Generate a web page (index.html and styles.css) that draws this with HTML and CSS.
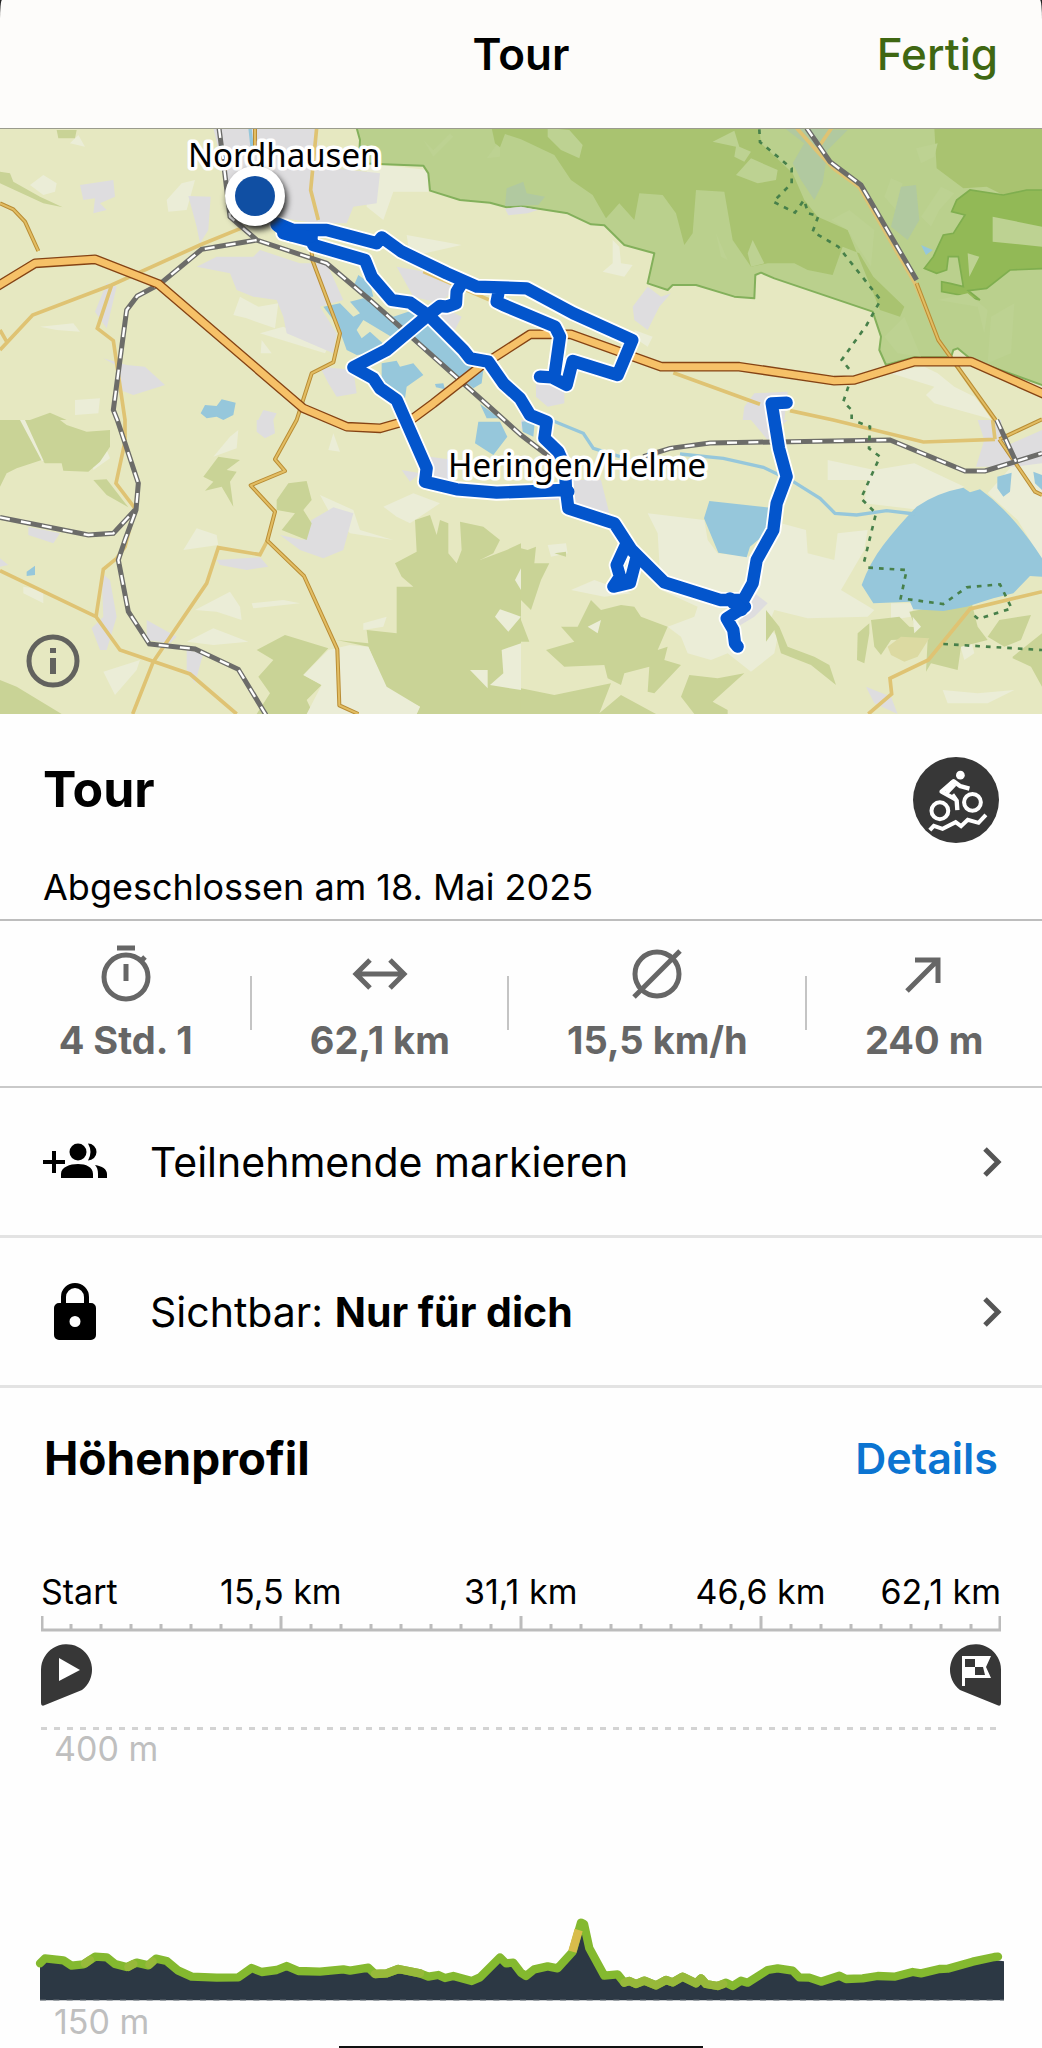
FILE: index.html
```
<!DOCTYPE html>
<html lang="de">
<head>
<meta charset="utf-8">
<meta name="viewport" content="width=device-width, initial-scale=1">
<title>Tour</title>
<link rel="stylesheet" href="styles.css">
</head>
<body>
<div class="backdrop">
  <header class="navbar">
    <h1 class="navbar-title">Tour</h1>
    <button class="done" type="button">Fertig</button>
  </header>
</div>

<main>
  <section class="map" aria-label="Karte">
    <svg class="map-canvas" viewBox="0 1 1042 585" preserveAspectRatio="xMidYMid slice">
      <defs>
        <path id="main-road" d="M-10,500 105,430 285,418 475,492 910,865 1040,920 1140,925 1235,898 1300,850 1440,740 1590,643 1713,643 1983,740 2218,740 2503,782 2563,780 2743,725 2913,725 3136,824"/>
        <path id="track" d="M830,310 880,330 980,330 1130,370 1145,352 1205,395 1340,460 1430,500 1580,505 1720,580 1897,660 1853,765 1718,723 1700,795 1655,772 1620,770M1663,770 1680,650 1665,620 1510,555 1490,545 1498,505M1385,490 1370,515 1368,550 1340,560 1320,558 1285,585 1160,690 1060,742 1120,775 1140,805 1190,840 1280,1045 1275,1085 1370,1108 1490,1118 1690,1110M850,340 935,362 940,375 1095,420 1115,470 1175,540 1230,548 1290,590 1390,690 1410,715 1465,725 1510,790 1560,835 1590,885 1640,905 1633,955 1675,995 1695,1040 1698,1110 1705,1165 1843,1210 1895,1290 1993,1387 2160,1440 2230,1440 2258,1390 2270,1320 2320,1230 2330,1150 2360,1070 2337,985 2315,850 2360,848M1880,1270 1850,1335 1860,1370 1840,1400 1890,1388 1910,1310M2200,1450 2235,1460 2180,1495 2200,1530 2205,1570 2213,1580"/>
        <path id="rails" d="M657,24 672,140 690,290 770,360 980,430 1110,540 1563,945 1650,1012M770,360 605,388 480,492 412,528 380,570 340,870 352,900 415,1090 408,1170 375,1260 355,1320 385,1475 448,1572 585,1587 715,1648 798,1785M0,1192 265,1245 340,1240 405,1170M1930,1010 2010,985 2130,969 2670,960 2895,1053 2955,1053 3126,1000M2420,24 2490,125 2583,195 2750,480M2990,900 3048,1025"/>
        <path id="state-roads" d="M0,250 40,268 75,305 115,393M765,24 765,100M935,395 937,420 1020,640 1000,727 935,760 890,900 825,1018 855,1053 752,1096 825,1175 802,1262 912,1368 1012,1588 1018,1756 1075,1782M2750,490 2815,660 2987,900M2998,958 3105,1115 3126,1125M2998,958 3126,898"/>
      </defs>
      <g transform="translate(0 -8) scale(.33333)">
        <!-- north-west areas -->
        <g class="pale">
          <path d="M90,195 130,165 170,190 165,215 130,225ZM500,240 545,190 585,180 560,270 505,275ZM700,585 720,530 775,560 835,550 825,625 740,595ZM780,640 850,620 985,680 975,700ZM120,620 220,610 240,635 170,630ZM785,660 815,700 782,700ZM1220,345 1385,375 1230,410ZM1100,130 1285,150 1285,215 1180,215 1150,300 1100,260ZM235,45 255,80 210,70ZM225,840 300,835 295,880 225,885Z"/>
        </g>
        <g class="town">
          <path d="M640,24 950,24 960,140 1140,160 1130,250 1060,260 1040,310 950,310 820,290 690,290 670,150ZM565,228 632,230 625,330 600,370 590,320ZM240,195 340,180 345,230 300,250 320,270 280,280 285,235 250,240ZM590,440 650,410 760,410 780,390 900,430 980,430 1030,540 960,560 1010,640 1000,700 860,640 850,590 830,540 760,530 710,510 690,460ZM320,490 350,500 320,625 285,575ZM310,715 380,735 435,740 495,795 400,825 360,810 355,740ZM960,740 1060,750 1070,820 1010,830 985,790ZM1190,440 1300,460 1370,500 1320,550 1240,530ZM1290,540 1385,590 1360,640ZM790,870 830,880 820,900 775,900Z"/>
          <path d="M1040,160 1130,180 1110,240 1050,250Z"/>
        </g>
        <g class="forest">
          <path d="M0,155 30,160 40,185 120,230 188,262 130,250 0,190ZM90,900 150,878 200,900ZM170,30 230,30 225,55 175,55Z"/>
        </g>
        <!-- nature park -->
        <path class="park" d="M1070,0 1070,24 1080,60 1076,130 1270,137 1285,160 1290,212 1380,240 1470,248 1520,262 1563,258 1703,280 1773,313 1813,316 1873,375 1963,400 1943,490 2003,510 2018,495 2088,495 2203,530 2263,535 2266,465 2283,458 2323,475 2618,575 2643,650 2638,690 2658,735 2743,712 2853,712 2860,690 2873,685 2913,718 3140,800 3140,0Z"/>
        <path class="meadow" d="M1270,60 1300,110 1360,50 1350,40 1300,90ZM1460,115 1500,60 1500,110Z"/>
        <path class="settlement" d="M1520,205 1570,185 1580,220 1635,230 1615,255 1515,258Z"/>
        <path class="town" d="M1515,266 1563,260 1613,270 1583,280 1525,286Z"/>
        <path class="wood" d="M1475,24 1485,70 1500,82 1515,42 1563,58 1663,105 1713,180 1778,225 1798,260 1818,295 1858,250 1903,300 1918,220 1988,225 2028,280 2053,375 2078,340 2088,210 2173,215 2198,360 2253,440 2303,430 2383,430 2423,450 2498,465 2528,380 2578,400 2620,470 2713,560 2700,590 2640,570 2620,520 2543,330 2453,290 2413,240 2378,160 2283,70 2278,24ZM2803,24 3126,24 3126,220 3010,225 2960,200 2890,205 2810,145Z"/>
        <path class="wood deep" d="M3140,210 3080,210 3010,225 2910,210 2870,240 2855,275 2895,285 2860,340 2830,345 2800,410 2773,445 2810,460 2840,450 2845,410 2875,410 2890,500 2850,490 2825,485 2825,515 2880,525 2940,540 2905,512 2960,505 3030,450 3140,445Z"/>
        <g transform="translate(1563 0)">
          <g class="meadow">
            <path d="M80,24 145,30 185,75 175,115 120,90 80,50ZM575,65 640,32 655,80 690,95 670,125 640,110 645,80ZM645,165 690,115 770,150 765,180 710,190ZM680,400 695,360 730,430 690,440ZM930,300 985,270 1060,330 1050,440 1010,380 980,330ZM1110,175 1145,190 1125,270 1090,230ZM1200,290 1260,200 1300,220 1255,270 1230,320ZM1415,290 1563,320 1563,380 1415,365ZM1340,400 1375,410 1345,470ZM1250,540 1340,520 1400,570 1390,640 1370,560ZM1410,590 1480,550 1470,700 1400,730ZM1090,650 1150,590 1200,710 1130,700Z"/>
            <path d="M585,340 620,420 600,410ZM1185,85 1250,70 1240,110 1200,130Z"/>
          </g>
          <path class="settlement" d="M790,24 980,30 920,90 905,190 880,240 840,180 815,130 850,70ZM1140,200 1185,195 1195,300 1160,360 1110,320Z"/>
          <path class="town" d="M335,560 380,500 420,530 450,520 415,560 380,630 340,600ZM45,790 130,800 130,850 80,860 45,830ZM700,820 800,815 790,900 665,900 670,860Z"/>
          <path class="pale" d="M275,360 295,380 300,430 335,435 310,470 245,455 275,430ZM1095,755 1210,740 1250,760 1300,800 1360,830 1420,900 1240,850 1215,825 1240,800ZM340,630 395,650 380,680 350,660Z"/>
          <path class="water" d="M1200,375 1235,390 1215,405Z"/>
        </g>
        <!-- south-west areas -->
        <g transform="translate(0 900)">
          <path class="pale" d="M30,130 100,120 80,10 0,0 0,190 20,160ZM640,110 690,50 715,30 710,85ZM550,390 590,325 650,345 655,375ZM585,570 690,515 720,560 725,600 650,575ZM755,550 850,540 900,550 760,565ZM560,665 640,625 745,665 640,675ZM310,755 420,720 410,750 345,825ZM270,70 320,90 330,115 280,150ZM960,225 1060,270 1080,330 1180,360 1050,340 990,280ZM1150,260 1240,220 1320,250 1230,310 1190,290ZM1000,40 1020,95 985,90ZM70,500 130,510 130,550 70,520ZM1090,610 1160,590 1150,620 1090,630Z"/>
          <path class="town" d="M85,320 180,340 160,370 85,345ZM840,345 910,360 935,300 1000,262 1060,280 1030,390 970,415 900,390ZM650,420 780,412 805,440 740,450 660,435ZM305,460 330,480 350,590 320,690 300,690 275,625 310,590ZM440,600 530,650 510,670 440,660ZM560,690 610,700 585,790 560,750ZM770,0 820,0 825,40 795,55 770,35ZM1205,150 1260,160 1230,185ZM0,415 25,435 0,440ZM1290,110 1360,120 1340,190 1290,170Z"/>
          <path class="forest" d="M0,0 180,0 200,15 260,35 330,30 330,80 300,125 265,155 190,152 185,130 135,130 125,120 50,145 20,160 0,200ZM280,180 320,178 385,262 320,225ZM610,170 655,110 720,120 680,150 710,155 690,185 700,260 665,200 615,212 640,185ZM830,240 865,190 920,183 935,240 910,270 935,310 920,360 845,330 885,280 830,270ZM0,780 50,800 185,882 0,882ZM770,690 855,645 985,685 910,765 965,795 920,840 940,882 770,882 810,820 775,770 820,720ZM1010,660 1105,670 1100,630 1190,640 1190,500 1240,500 1205,470 1185,430 1250,395 1245,300 1290,285 1310,345 1320,300 1345,310 1345,400 1370,430 1385,390 1380,305 1450,320 1500,360 1480,400 1440,420 1520,390 1563,370 1563,882 1250,882 1260,860 1160,810 1105,680Z"/>
          <path class="pale" d="M60,0 75,0 132,125 125,122ZM1050,675 1105,680 1160,800 1260,860 1250,882 920,882 965,795 910,765 985,690ZM1485,590 1500,568 1563,590 1525,635ZM1410,750 1463,750 1463,805ZM1505,690 1563,670 1563,810 1470,795 1510,760ZM1545,480 1563,445 1563,510Z"/>
        </g>
        <!-- south-east areas -->
        <g transform="translate(1563 900)">
          <path class="pale" d="M380,280 550,300 560,360 590,400 690,410 710,380 750,370 780,310 855,330 860,400 940,420 950,340 1040,330 1030,390 960,510 1060,570 1040,590 860,595 760,570 740,620 770,650 760,700 690,755 620,700 570,720 500,700 480,650 440,620 520,590 530,560 420,510 410,340ZM920,120 1060,150 1180,130 1330,200 1200,270 1030,250 1040,180 920,180ZM80,375 135,370 140,400 90,410ZM220,480 330,520 250,530 150,510ZM1265,810 1370,820 1480,810 1400,850 1330,850 1280,850ZM1110,550 1180,550 1170,590 1110,600ZM1480,130 1563,110 1563,420 1490,300 1400,220ZM770,420 840,430 800,480 780,460ZM1310,650 1350,660 1360,700 1330,720Z"/>
          <path class="town" d="M130,180 240,180 265,280 200,270 150,240 40,240ZM690,0 800,0 740,60ZM690,510 740,550 700,590 650,620ZM1370,0 1440,0 1450,80 1563,30 1563,130 1480,140 1365,140 1390,60ZM1035,800 1110,830 1130,882 1060,850ZM0,0 20,0 0,30Z"/>
          <path class="forest" d="M0,385 20,390 45,380 40,430 85,430 60,480 30,570 0,540ZM100,400 135,395 135,410ZM120,620 170,620 210,540 240,570 300,555 340,560 360,590 440,620 410,690 440,680 430,720 480,735 400,820 380,815 385,740 310,760 300,795 260,775 250,735 130,740 75,690 160,665ZM0,600 25,665 0,665ZM0,805 100,825 270,790 235,880 300,825 405,882 0,882ZM480,830 505,765 590,775 670,760 575,845 620,870 620,882 520,882ZM735,570 775,620 800,680 880,710 925,735 945,795 870,735 780,700 760,630 735,665ZM1010,640 1045,610 1045,640 1030,730 1008,720ZM1050,600 1135,590 1165,620 1225,625 1240,655 1110,660 1080,705 1060,680ZM1165,575 1350,540 1370,620 1400,660 1320,680 1310,750 1230,730 1215,755 1220,660 1190,640ZM1400,650 1435,600 1530,585 1500,660 1450,680ZM1475,710 1563,640 1563,800 1530,740 1475,715Z"/>
          <path class="sand" d="M1100,680 1140,650 1225,655 1190,710 1150,725 1110,705Z"/>
          <path class="pale" d="M200,620 240,600 230,640ZM1175,590 1200,620 1180,640Z"/>
        </g>
        <!-- lakes -->
        <g class="water">
          <path d="M1060,500 1075,465 1110,490 1120,530 1090,530ZM970,560 1020,550 1060,590 1080,580 1050,545 1090,535 1180,590 1240,570 1280,590 1370,640 1450,750 1445,790 1420,805 1390,780 1350,760 1200,630 1190,660 1140,630 1090,600 1070,630 1085,655 1110,635 1160,680 1120,700 1070,705 1040,690 1015,620ZM1145,730 1190,722 1200,740 1240,730 1270,765 1220,800 1215,835 1180,815 1145,780ZM1305,792 1330,790 1335,808 1308,802ZM602,880 615,855 650,858 665,838 707,848 700,885 670,900 650,890 620,895ZM1440,852 1500,895 1460,895ZM1435,905 1500,905 1522,950 1480,1005 1425,970ZM1565,905 1605,900 1600,950 1568,935ZM80,1355 105,1337 105,1365 80,1368Z"/>
          <path d="M2128,1143 2310,1163 2310,1230 2250,1280 2240,1312 2155,1298 2112,1195Z"/>
          <path d="M2585,1395Q2608,1330 2650,1275T2750,1160Q2810,1118 2890,1103L2910,1117 2940,1108Q3040,1180 3126,1315V1370L3090,1368 3040,1420 2980,1435 2900,1460 2830,1473 2740,1468 2730,1445 2620,1450Z"/>
          <path d="M2992,1070 3035,1058 3030,1115 3010,1130 2992,1105ZM3100,1055 3126,1065 3126,1110 3105,1090Z"/>
        </g>
        <path class="river" d="M1640,895 1750,940 1780,985 1860,1010M2040,1002 2170,1015 2290,1042 2380,1085 2460,1135 2505,1180 2570,1185 2660,1172 2745,1182M750,24 756,80"/>

        <!-- minor roads -->
        <g class="road">
          <path d="M0,690 98,585 335,495 600,375 735,320M0,630 20,665M335,495 292,625 340,662 375,900 375,965 348,1090 405,1165 375,1280 350,1315 310,1348 288,1490M0,1352 288,1490 360,1590 570,1662 710,1782M398,1782 460,1625 620,1390 655,1283 780,1304 802,1262M950,24 932,210 955,300M1270,455 1480,545M2020,758 2280,853M2370,872 2500,900 2770,966 2985,958M2978,900 2985,958M3126,1415 2910,1467 2785,1620 2670,1675 2675,1722 2605,1782"/>
          <path d="M2390,24 2450,92 2500,145 2578,202 2745,490 2815,660 2987,905M2495,24 2450,90"/>
        </g>
        <use href="#state-roads" class="state-edge"/>
        <use href="#state-roads" class="state-core"/>

        <use href="#rails" class="rail"/>
        <use href="#rails" class="rail-dash"/>

        <!-- federal road -->
        <use href="#main-road" class="main-edge"/>
        <use href="#main-road" class="main-core"/>

        <path class="border" d="M2278,28 2280,66 2375,145 2375,190 2320,245 2385,278 2412,240 2425,280 2455,288 2438,335 2515,380 2642,540 2600,615 2525,720 2550,750M2545,800 2530,845 2555,870 2555,900M2575,907 2610,920 2607,985 2640,1010 2583,1135 2628,1180 2590,1335M2605,1343 2720,1350 2702,1435 2830,1452 2900,1402 3000,1393 3035,1465 2935,1497 2910,1475M2830,1572 3126,1590"/>

        <!-- recorded track -->
        <use href="#track" class="track-halo"/>
        <use href="#track" class="track"/>
        <path class="track" d="M830,315 870,345 935,350M1695,1105 1705,1115M2190,1435 2225,1470M1848,1395 1885,1380"/>
      </g>

      <text class="place" x="188" y="39">Nordhausen</text>
      <circle class="pin-shadow" cx="257" cy="72" r="30"/>
      <circle class="pin-ring" cx="255" cy="68" r="30"/>
      <circle class="pin-dot" cx="255" cy="68" r="20"/>
      <text class="place" x="448" y="349">Heringen/Helme</text>
    </svg>
    <button class="map-info" type="button" aria-label="Karteninformationen">
      <svg viewBox="0 0 54 54"><circle cx="27" cy="27" r="24" fill="none" stroke="#62625e" stroke-width="5"/><path fill="#62625e" d="M24 14h6v5h-6zM24 24h6v16h-6z"/></svg>
    </button>
  </section>

  <section class="summary">
    <div class="summary-head">
      <h2 class="tour-name">Tour</h2>
      <svg class="sport" viewBox="41 36 256 256" role="img" aria-label="Mountainbike">
        <circle cx="169" cy="164" r="128" fill="#373737"/>
        <circle cx="182" cy="90" r="13" fill="#fff"/>
        <g fill="none" stroke="#fff">
          <circle cx="121" cy="196" r="25" stroke-width="12"/>
          <circle cx="218" cy="171" r="25" stroke-width="12"/>
          <path stroke-width="13" stroke-linejoin="round" d="M168 162 126 139 162 108 182 123 209 130"/>
          <path stroke-width="13" d="M158 148 171 166 173 194"/>
          <path stroke-width="22" d="M138 139 162 114"/>
          <path stroke-width="12" d="M91 254 103 241 129 250 168 230 184 242 204 223 236 232 258 208"/>
        </g>
      </svg>
    </div>
    <p class="finished">Abgeschlossen am 18. Mai 2025</p>
  </section>

  <ul class="stats">
    <li class="stat">
      <svg class="stat-icon" viewBox="0 0 60 60"><circle cx="30" cy="33" r="22"/><path d="M21 4h18M30 20v17M44 18l5-5"/></svg>
      <span>4 Std. 1</span>
    </li>
    <li class="stat">
      <svg class="stat-icon" viewBox="0 0 60 60"><path d="M6 30h48M20 16 6 30l14 14M40 16l14 14-14 14"/></svg>
      <span>62,1 km</span>
    </li>
    <li class="stat">
      <svg class="stat-icon" viewBox="0 0 60 60"><circle cx="30" cy="30" r="22"/><path d="M7 53 53 7"/></svg>
      <span>15,5 km/h</span>
    </li>
    <li class="stat">
      <svg class="stat-icon" viewBox="0 0 60 60"><path d="M13 47 44 16M21 16h23v23"/></svg>
      <span>240 m</span>
    </li>
  </ul>

  <button class="row" type="button">
    <svg class="row-icon" viewBox="0 0 66 60"><path d="M8 19h4v9h9v4h-9v9H8v-9H-1v-4h9z"/><circle cx="34" cy="20" r="8.500"/><path d="M44 11.500a8.500 8.500 0 1 1 0 17q5-8.500 0-17zM17 46v-4c0-7 9-10 17-10s15 3 15 10v4zM51 33c7 1 12 4 12 9v4h-9v-4c0-4-1-7-3-9z"/></svg>
    <span class="row-label">Teilnehmende markieren</span>
    <svg class="chevron" viewBox="0 0 20 32"><path d="M3 3 16 16 3 29"/></svg>
  </button>
  <button class="row" type="button">
    <svg class="row-icon" viewBox="0 0 66 60"><path fill-rule="evenodd" d="M17 21v-6a14 14 0 0 1 28 0v6h2a5 5 0 0 1 5 5v27a5 5 0 0 1-5 5H15a5 5 0 0 1-5-5V26a5 5 0 0 1 5-5zM22 21h18v-6a9 9 0 0 0-18 0zM31 34a5.500 5.500 0 1 0 0 11 5.500 5.500 0 0 0 0-11z"/></svg>
    <span class="row-label">Sichtbar: <strong>Nur für dich</strong></span>
    <svg class="chevron" viewBox="0 0 20 32"><path d="M3 3 16 16 3 29"/></svg>
  </button>

  <section class="profile">
    <div class="profile-head">
      <h2 class="profile-title">Höhenprofil</h2>
      <a class="details" href="#details">Details</a>
    </div>
    <div class="axis">
      <span>Start</span><span>15,5 km</span><span>31,1 km</span><span>46,6 km</span><span>62,1 km</span>
    </div>
    <svg class="ruler" viewBox="0 0 960 16"><path d="M0 14H960M1 0V14M240 0V14M480 0V14M720 0V14M959 0V14"/><path d="M30 8v6M60 8v6M90 8v6M120 8v6M150 8v6M180 8v6M210 8v6M270 8v6M300 8v6M330 8v6M360 8v6M390 8v6M420 8v6M450 8v6M510 8v6M540 8v6M570 8v6M600 8v6M630 8v6M660 8v6M690 8v6M750 8v6M780 8v6M810 8v6M840 8v6M870 8v6M900 8v6M930 8v6"/></svg>
    <div class="flags">
      <svg class="flag" viewBox="0 0 51 62"><path fill="#373737" d="M0 25.500A25.500 25.500 0 1 1 41 46L4 61Q0 63 0 59z"/><path fill="#fff" d="M18 14 39 26 18 37z"/></svg>
      <svg class="flag" viewBox="0 0 51 62"><path fill="#373737" d="M51 25.500A25.500 25.500 0 1 0 10 46L47 61Q51 63 51 59z"/><path fill="#fff" fill-rule="evenodd" d="M12 12H41L36 23 41 34H15V42H12zM15 15V23H25V31H35L33 23H25V15z"/></svg>
    </div>
    <p class="level level-top">400 m</p>
    <svg class="elevation" viewBox="0 0 3126 369">
      <path class="ground" d="M120,361V250L135,235 190,241 215,257 250,253 285,230 320,232 345,252 380,261 410,248 445,256 468,236 500,243 535,272 575,290 650,293 715,292 755,264 785,276 830,270 860,258 895,273 960,275 1030,268 1050,272 1105,263 1125,282 1160,280 1195,267 1260,280 1285,290 1315,285 1335,294 1360,288 1415,303 1440,292 1500,232 1518,250 1540,248 1563,278 1578,288 1603,268 1643,259 1673,265 1718,215 1743,128 1768,205 1813,287 1853,283 1873,308 1888,303 1908,312 1933,302 1968,316 1998,300 2018,307 2048,290 2088,310 2103,295 2118,312 2153,318 2178,308 2198,318 2223,302 2243,308 2303,270 2333,265 2378,272 2398,292 2428,293 2463,305 2518,287 2538,297 2588,295 2633,288 2683,290 2738,276 2763,280 2818,267 2843,266 2918,245 2983,240 3012,244V361Z"/>
      <path class="base" d="M120,361H3012"/>
      <path class="slope" d="M120,250 135,235 190,241 215,257 250,253 285,230 320,232 345,252 380,261 410,248 445,256 468,236 500,243 535,272 575,290 650,293 715,292 755,264 785,276 830,270 860,258 895,273 960,275 1030,268 1050,272 1105,263 1125,282 1160,280 1195,267 1260,280 1285,290 1315,285 1335,294 1360,288 1415,303 1440,292 1500,232 1518,250 1540,248 1563,278 1578,288 1603,268 1643,259 1673,265 1718,215 1743,128 1752,132 1768,205 1813,287 1853,283 1873,308 1888,303 1908,312 1933,302 1968,316 1998,300 2018,307 2048,290 2088,310 2103,295 2118,312 2153,318 2178,308 2198,318 2223,302 2243,308 2303,270 2333,265 2378,272 2398,292 2428,293 2463,305 2518,287 2538,297 2588,295 2633,288 2683,290 2738,276 2763,280 2818,267 2843,266 2918,245 2983,231 2994,230"/>
      <path class="slope mild" d="M255,251 270,240M385,261 400,252M448,254 458,244M1125,282 1160,280 1195,267 1260,280M1873,308 1888,303 1908,312 1933,302 1968,316 1998,300 2018,307 2048,290 2088,310 2103,295 2118,312 2153,318 2170,312"/>
      <path class="slope steep" d="M1717,215 1736,150"/>
    </svg>
    <p class="level">150 m</p>
  </section>
</main>
<div class="home-bar"></div>
</body>
</html>
```
FILE: styles.css
```
* { box-sizing: border-box; margin: 0; padding: 0; }
body { position: relative; min-height: 100vh; background: #fefefe; color: #000; font-family: Inter, "Liberation Sans", sans-serif; overflow-x: hidden; }
button { border: 0; background: none; color: inherit; font: inherit; cursor: pointer; }
svg { display: block; }
ul { list-style: none; }

.backdrop { background: #222; }
.navbar { display: grid; grid-template-columns: 1fr auto 1fr; align-items: center; height: 128px; padding: 0 44px 21px; background: #fdfcfa; border-radius: 2px 2px 0 0 / 20px 20px 0 0; }
.navbar-title { grid-column: 2; font-size: 44px; line-height: 56px; font-weight: 600; }
.done { justify-self: end; color: #3f6712; font-size: 44px; line-height: 56px; font-weight: 500; }

.map { position: relative; border-top: 1px solid #9a9b8c; }
.map-canvas { width: 100%; background: #e6e8c1; }
.pale { fill: #ebedd7; }
.town { fill: #dedddf; }
.forest { fill: #c9d396; }
.park { fill: #bad08d; stroke: #83b05b; stroke-width: 6; stroke-linejoin: round; }
.wood { fill: #a9c370; }
.deep { fill: #92b956; stroke: #7fae4f; stroke-width: 5; }
.meadow { fill: #bdd292; }
.settlement { fill: #b1c9a0; }
.sand { fill: #dcdaa2; }
.water { fill: #96c7db; }
.river { fill: none; stroke: #96c7db; stroke-width: 10; }
.road { fill: none; stroke: #dfc373; stroke-width: 11; }
.state-edge { fill: none; stroke: #b98d35; stroke-width: 12; stroke-linejoin: round; }
.state-core { fill: none; stroke: #e2bd63; stroke-width: 6; stroke-linejoin: round; }
.rail { fill: none; stroke: #6c6c69; stroke-width: 15; }
.rail-dash { fill: none; stroke: #fff; stroke-width: 7; stroke-dasharray: 30 34; }
.main-edge { fill: none; stroke: #854314; stroke-width: 29; stroke-linejoin: round; }
.main-core { fill: none; stroke: #f6c168; stroke-width: 21; stroke-linejoin: round; }
.border { fill: none; stroke: #47804a; stroke-width: 8; stroke-dasharray: 14 18; }
.track-halo { fill: none; stroke: #fff; stroke-width: 48; stroke-linejoin: round; stroke-linecap: round; }
.track { fill: none; stroke: #0355cc; stroke-width: 37; stroke-linejoin: round; stroke-linecap: round; }
.place { font-family: "Noto Sans", sans-serif; font-size: 33px; fill: #000; stroke: #fff; stroke-width: 7px; stroke-linejoin: round; paint-order: stroke; }
.pin-shadow { fill: #222; filter: blur(3px); }
.pin-ring { fill: #fff; }
.pin-dot { fill: #104fa3; }
.map-info { position: absolute; left: 26px; bottom: 26px; width: 54px; height: 54px; }

.summary { padding: 43px 43px 8px; border-bottom: 2px solid #bdbdbd; }
.summary-head { display: flex; justify-content: space-between; align-items: flex-start; }
.tour-name { font-size: 50px; line-height: 64px; font-weight: 700; }
.sport { width: 86px; height: 86px; }
.finished { margin-top: 20px; font-size: 36px; line-height: 48px; }

.stats { display: flex; align-items: center; padding: 23px 0 24px; border-bottom: 2px solid #c9c9c9; color: #666; font-size: 38px; line-height: 44px; font-weight: 700; }
.stat { position: relative; display: flex; flex: 1 1 auto; flex-direction: column; align-items: center; gap: 14px; white-space: nowrap; }
.stat + .stat::before { content: ""; position: absolute; left: -1px; top: 32px; width: 2px; height: 54px; background: #c4c4c4; }
.stat-icon { width: 60px; height: 60px; fill: none; stroke: #666; stroke-width: 5; }

.row { display: flex; align-items: center; width: 100%; height: 150px; padding: 0 40px 0 44px; border-bottom: 3px solid #e3e3e3; font-size: 41px; line-height: 56px; text-align: left; }
.row-icon { width: 66px; height: 60px; margin-right: 40px; overflow: visible; }
.row-label { flex: 1; }
.row strong { font-weight: 700; }
.chevron { width: 20px; height: 32px; fill: none; stroke: #555; stroke-width: 5; }

.profile { padding: 38px 41px 0; }
.profile-head { display: flex; justify-content: space-between; align-items: center; padding: 0 3px; }
.profile-title { font-size: 46px; line-height: 64px; font-weight: 700; }
.details { color: #0b74d1; font-size: 43px; line-height: 64px; font-weight: 600; text-decoration: none; }
.axis { display: grid; grid-template-columns: 1fr 2fr 2fr 2fr 1fr; justify-items: center; margin-top: 82px; font-size: 34px; line-height: 40px; white-space: nowrap; }
.axis span:first-child { justify-self: start; }
.axis span:last-child { justify-self: end; }
.ruler { width: 100%; margin-top: 4px; fill: none; stroke: #bcbcbc; stroke-width: 3; }
.flags { display: flex; justify-content: space-between; margin-top: 12px; }
.flag { width: 51px; height: 62px; }
.level { padding-left: 13px; color: #bfbfbf; font-size: 34px; line-height: 38px; }
.level-top { margin-top: 21px; border-top: 3px solid transparent; background: repeating-linear-gradient(90deg, #d3d3d3 0 6px, transparent 6px 13px) top / 100% 3px no-repeat border-box; }
.elevation { width: calc(100% + 82px); margin: 112px -41px 0; }
.ground { fill: #2c3844; }
.slope { fill: none; stroke: #84b92f; stroke-width: 25; stroke-linejoin: round; stroke-linecap: round; }
.mild { stroke: #97b93a; }
.steep { stroke: #d8bc4b; stroke-linecap: butt; }
.base { stroke: #9aa0a5; stroke-width: 4; stroke-dasharray: 18 22; }
.home-bar { position: absolute; left: 50%; bottom: 0; width: 364px; height: 2px; transform: translateX(-50%); background: #111; }
```
